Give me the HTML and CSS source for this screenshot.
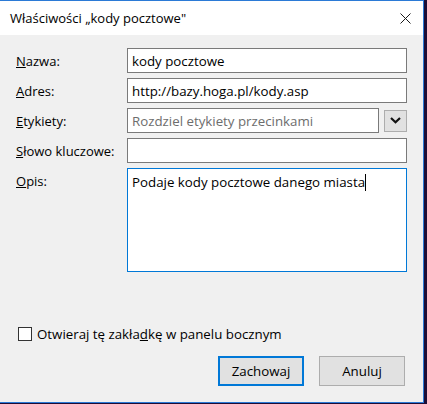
FILE: index.html
```html
<!DOCTYPE html>
<html lang="pl">
<head>
<meta charset="utf-8">
<title>Właściwości</title>
<link rel="stylesheet" href="styles.css">
</head>
<body>
<div class="desktop">
  <div class="window">
    <div class="titlebar">
      <span class="title">Właściwości „kody pocztowe"</span>
      <span class="close">
        <svg width="11" height="11" viewBox="0 0 11 11"><path d="M0.5 0.5 L10.5 10.5 M10.5 0.5 L0.5 10.5" stroke="#1a1a1a" stroke-width="1" fill="none"/></svg>
      </span>
    </div>
    <div class="content">
      <div class="form">
        <label class="lbl"><u>N</u>azwa:</label>
        <div class="field">kody pocztowe</div>

        <label class="lbl"><u>A</u>dres:</label>
        <div class="field">http://bazy.hoga.pl/kody.asp</div>

        <label class="lbl"><u>E</u>tykiety:</label>
        <div class="tagrow">
          <div class="field placeholder">Rozdziel etykiety przecinkami</div>
          <button class="drop">
            <svg width="11" height="7" viewBox="0 0 11 7"><path d="M1 1 L5.5 5.2 L10 1" stroke="#111" stroke-width="2.2" fill="none"/></svg>
          </button>
        </div>

        <label class="lbl"><u>S</u>łowo kluczowe:</label>
        <div class="field"></div>

        <label class="lbl top"><u>O</u>pis:</label>
        <div class="field area">Podaje kody pocztowe danego miasta<span class="caret"></span></div>
      </div>

      <div class="check">
        <span class="box"></span>
        <span>Otwieraj tę zakła<u>d</u>kę w panelu bocznym</span>
      </div>

      <div class="buttons">
        <button class="btn default">Zachowaj</button>
        <button class="btn">Anuluj</button>
      </div>
    </div>
  </div>
</div>
</body>
</html>
```

FILE: styles.css
```css
* { box-sizing: border-box; }
html, body { margin: 0; padding: 0; }
body {
  font-family: "Open Sans", "Noto Sans", sans-serif;
  font-size: 13px;
  color: #000;
}
.desktop {
  width: 427px;
  height: 404px;
  background: #1c0d36;
}
.window {
  width: 424px;
  height: 403px;
  border-top: 1px solid #2b7ad6;
  border-right: 1px solid #2b7ad6;
  border-bottom: 1px solid #2b7ad6;
  background: #f0f0f0;
  display: flex;
  flex-direction: column;
}
.titlebar {
  flex-shrink: 0;
  height: 34px;
  background: #fff;
  display: flex;
  align-items: center;
  justify-content: space-between;
  padding-left: 10px;
  padding-right: 12px;
}
.title { font-size: 13px; }
.close { display: flex; padding-top: 1px; }
.content {
  flex: 1;
  padding: 13px 16px 0 16px;
  display: flex;
  flex-direction: column;
}
.form {
  display: grid;
  grid-template-columns: 111px 1fr;
  grid-template-rows: 25px 25px 25px 25px 104px;
  row-gap: 5px;
  align-items: center;
}
.lbl { line-height: 16px; }
.lbl.top { align-self: start; padding-top: 5px; }
.field {
  height: 25px;
  background: #fff;
  border: 1px solid #7a7a7a;
  padding: 0 4px;
  display: flex;
  align-items: center;
  white-space: nowrap;
  overflow: hidden;
  font-size: 13.3px;
}
.placeholder { color: #6d6d6d; }
.tagrow {
  display: flex;
  align-items: center;
  gap: 5px;
}
.tagrow .field { flex: 1; }
.drop {
  width: 23px;
  height: 22px;
  background: #e1e1e1;
  border: 1px solid #adadad;
  padding: 0;
  display: flex;
  align-items: center;
  justify-content: center;
}
.area {
  height: 104px;
  align-self: start;
  align-items: flex-start;
  padding-top: 4px;
  border-color: #0078d7;
}
.caret {
  display: inline-block;
  width: 1px;
  height: 17px;
  background: #000;
  margin-top: 1px;
}
.check {
  margin-top: 53px;
  margin-left: 2px;
  display: flex;
  align-items: center;
  gap: 5px;
  font-size: 13.3px;
}
.box {
  width: 14px;
  height: 14px;
  border: 1px solid #333;
  background: #fff;
  flex-shrink: 0;
}
.buttons {
  margin-top: 13px;
  display: flex;
  justify-content: flex-end;
  gap: 15px;
  padding-right: 2px;
}
.btn {
  width: 86px;
  height: 30px;
  background: #e1e1e1;
  border: 1px solid #adadad;
  font-family: inherit;
  font-size: 13.3px;
  color: #000;
  padding: 0;
}
.btn.default { border: 2px solid #0078d7; }
```
